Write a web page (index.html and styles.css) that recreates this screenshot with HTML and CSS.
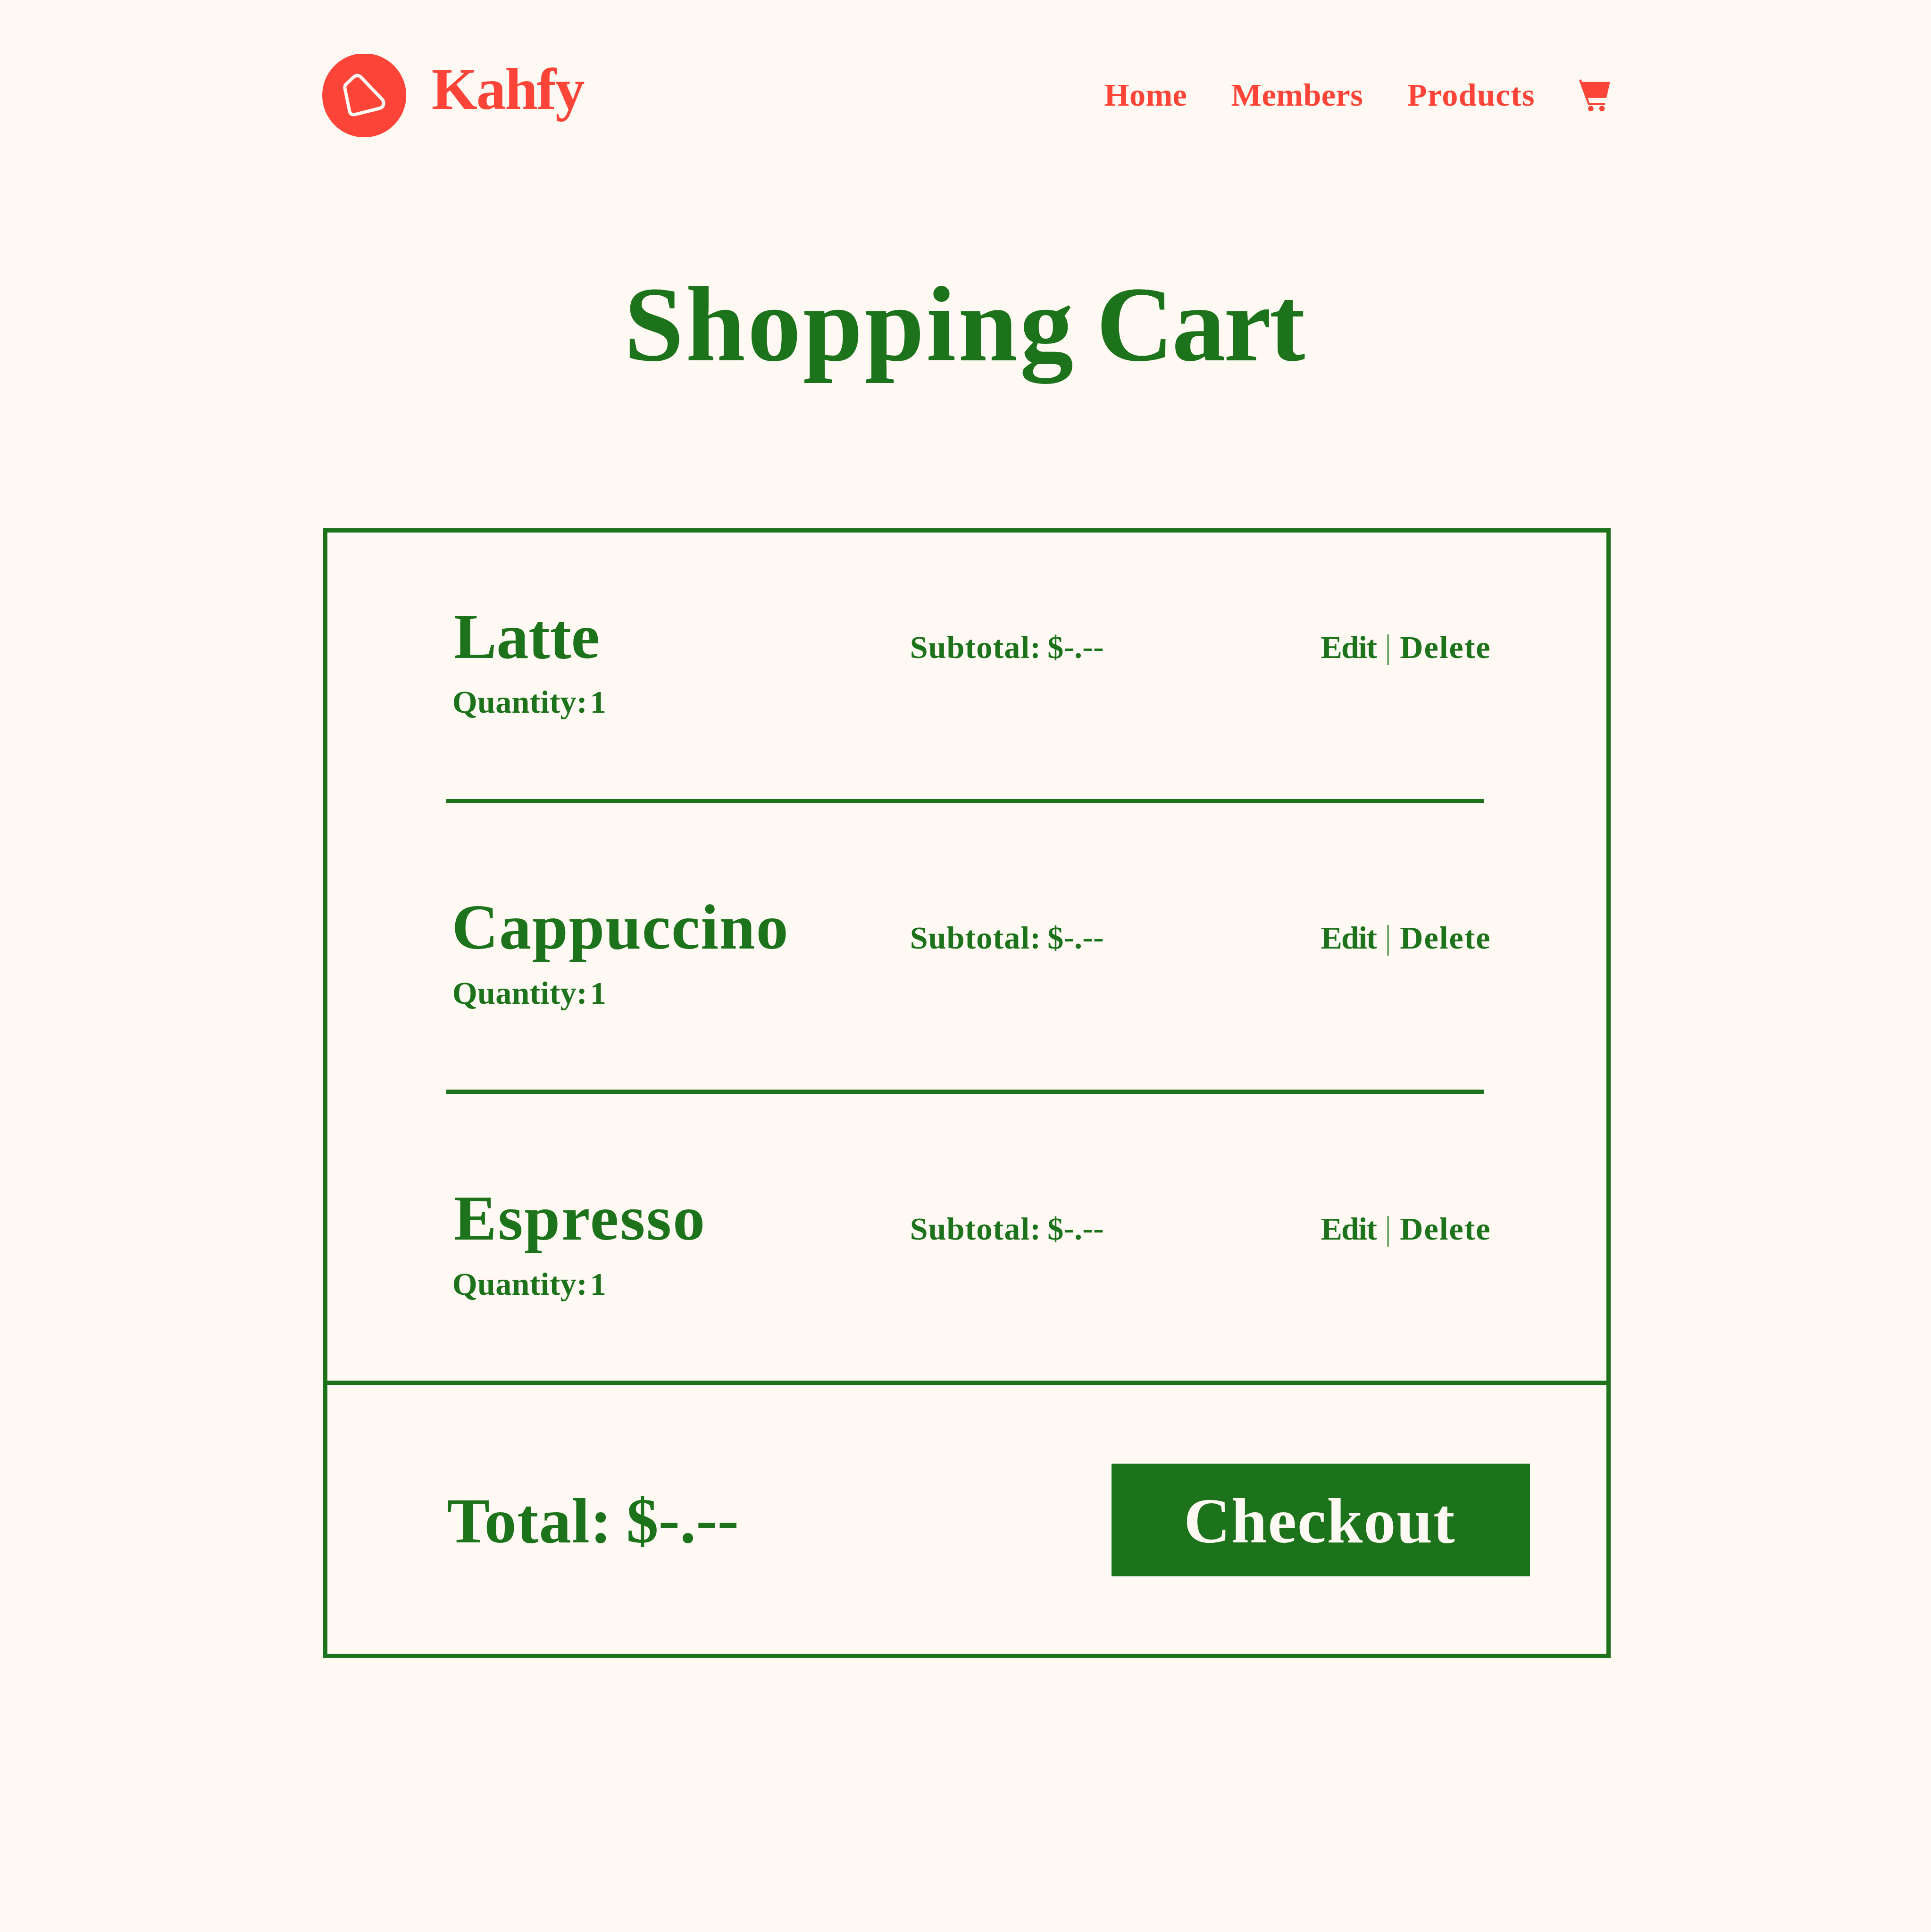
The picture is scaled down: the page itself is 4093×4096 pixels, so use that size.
FILE: index.html
```
<!DOCTYPE html>
<html lang="en">
<head>
  <meta charset="utf-8">
  <title>Kahfy - Shopping Cart</title>
  <link rel="stylesheet" href="styles.css">
</head>
<body>
  <header class="header">
    <div class="brand">
      <svg class="brand__mark" viewBox="0 0 188 186" aria-hidden="true">
        <circle cx="94" cy="93" r="94" fill="#fc4438"/>
        <path d="M69 53.2Q78.5 44.5 86.8 52.5L134 102C139.6 108.5 138 119.6 129 121.9L72.7 136Q63.5 137.5 61.2 129L50.8 78Q49.5 71.5 54.5 67Z" fill="none" stroke="#fef9f2" stroke-width="7.4"/>
      </svg>
      <span class="brand__name">Kahfy</span>
    </div>
    <nav class="nav">
      <a class="nav__home">Home</a>
      <a class="nav__members">Members</a>
      <a class="nav__products">Products</a>
      <svg class="nav__cart" viewBox="0 0 210 216" role="img" aria-label="Cart">
        <path d="M0 6L13 0L20 18H208L184 126H59L70 159H175V173H61Z" fill="#fc4438"/>
        <circle cx="79" cy="197" r="18.5" fill="#fc4438"/>
        <circle cx="154" cy="197" r="18.5" fill="#fc4438"/>
      </svg>
    </nav>
  </header>

  <h1 class="title">Shopping <span class="title__end">Cart</span></h1>

  <main class="cart">
    <section class="item item--latte">
      <div class="item__info">
        <h2 class="item__name">Latte</h2>
        <p class="item__quantity">Quantity: 1</p>
      </div>
      <p class="item__subtotal">Subtotal: <span class="amount">$<i>-</i>.<i>--</i></span></p>
      <p class="item__actions"><a class="edit">Edit</a><span class="bar">|</span><a class="delete">Delete</a></p>
    </section>
    <section class="item item--cappuccino">
      <div class="item__info">
        <h2 class="item__name">Cappuccino</h2>
        <p class="item__quantity">Quantity: 1</p>
      </div>
      <p class="item__subtotal">Subtotal: <span class="amount">$<i>-</i>.<i>--</i></span></p>
      <p class="item__actions"><a class="edit">Edit</a><span class="bar">|</span><a class="delete">Delete</a></p>
    </section>
    <section class="item item--espresso">
      <div class="item__info">
        <h2 class="item__name">Espresso</h2>
        <p class="item__quantity">Quantity: 1</p>
      </div>
      <p class="item__subtotal">Subtotal: <span class="amount">$<i>-</i>.<i>--</i></span></p>
      <p class="item__actions"><a class="edit">Edit</a><span class="bar">|</span><a class="delete">Delete</a></p>
    </section>
    <footer class="summary">
      <p class="summary__total">Total: <span class="amount">$<i>-</i>.<i>--</i></span></p>
      <button class="checkout" type="button">Checkout</button>
    </footer>
  </main>
</body>
</html>
```
FILE: styles.css
```
:root {
  --red: #fc4438;
  --green: #1d731b;
  --cream: #fef9f2;
  font-size: 9.4745px;
}

* {
  box-sizing: border-box;
  margin: 0;
  padding: 0;
}

body {
  min-height: 100vh;
  background: var(--cream);
  color: var(--green);
  font-family: "Liberation Serif", "Times New Roman", serif;
  font-weight: 700;
  white-space: nowrap;
}

.header {
  display: flex;
  justify-content: space-between;
  align-items: center;
  padding: 12rem 71.7rem 0 72.04rem;
  color: var(--red);
}

.brand {
  display: flex;
  align-items: flex-start;
  gap: 5.7rem;
}

.brand__mark {
  display: block;
  width: 18.8rem;
  height: 18.6rem;
}

.brand__name {
  font-size: 13.2rem;
  line-height: 15.9rem;
  letter-spacing: -0.017em;
}

.nav {
  display: flex;
  align-items: center;
  gap: 9.85rem;
  font-size: 7.2rem;
  line-height: 9rem;
}

.nav__home { letter-spacing: 0.005em; }
.nav__members { letter-spacing: 0.007em; }
.nav__products { letter-spacing: 0.0205em; }

.nav__cart {
  display: block;
  width: 7rem;
  height: 7.2rem;
}

.title {
  margin-top: 29.97rem;
  padding-right: 0.8rem;
  font-size: 24rem;
  line-height: 24rem;
  letter-spacing: 0.0185em;
  word-spacing: -0.074em;
  text-align: center;
}

.title__end { letter-spacing: -0.017em; }

.cart {
  width: 288rem;
  margin: 33.63rem 0 0 72.3rem;
  border: 9px solid var(--green);
}

.item {
  display: grid;
  grid-template-columns: 102.37rem 91.9rem auto;
  align-items: baseline;
  width: 232.2rem;
  margin-left: 26.65rem;
  padding: 19.84rem 0 17.09rem 1.3rem;
  border-bottom: 9px solid var(--green);
  font-size: 7.2rem;
  line-height: 9rem;
}

.item--latte { padding-top: 15.31rem; }
.item--espresso { border-bottom: 0; }

.item__name {
  margin-left: 0.3rem;
  font-size: 14.4rem;
  line-height: 16rem;
}

.item--latte .item__name { letter-spacing: -0.002em; }
.item--cappuccino .item__name { margin-left: -0.1rem; letter-spacing: 0.0125em; }
.item--espresso .item__name { letter-spacing: 0.0205em; }

.item__quantity {
  margin-top: 2.2rem;
  letter-spacing: 0.003em;
  word-spacing: -0.165em;
}

.item__subtotal {
  letter-spacing: 0.015em;
  word-spacing: -0.07em;
}

.amount { letter-spacing: 0; }

.amount i {
  font-style: normal;
  font-weight: 400;
  line-height: 1;
  vertical-align: 0.03em;
}

.item__actions { display: flex; }
.edit { letter-spacing: -0.027em; }
.delete { letter-spacing: 0.028em; }

.bar {
  width: 5.3rem;
  font-family: Lato, "Liberation Sans", sans-serif;
  font-weight: 300;
  text-align: center;
}

.summary {
  display: flex;
  justify-content: space-between;
  align-items: baseline;
  height: 61.1rem;
  padding: 17.65rem 17.05rem 0 26.7rem;
  border-top: 9px solid var(--green);
  font-size: 14.4rem;
}

.summary__total {
  letter-spacing: 0.0085em;
  word-spacing: -0.04em;
}

.checkout {
  width: 93.6rem;
  height: 25.2rem;
  padding-right: 0.5rem;
  border: 0;
  background: var(--green);
  color: var(--cream);
  font: inherit;
  line-height: 25.6rem;
  letter-spacing: 0.0138em;
}
```
